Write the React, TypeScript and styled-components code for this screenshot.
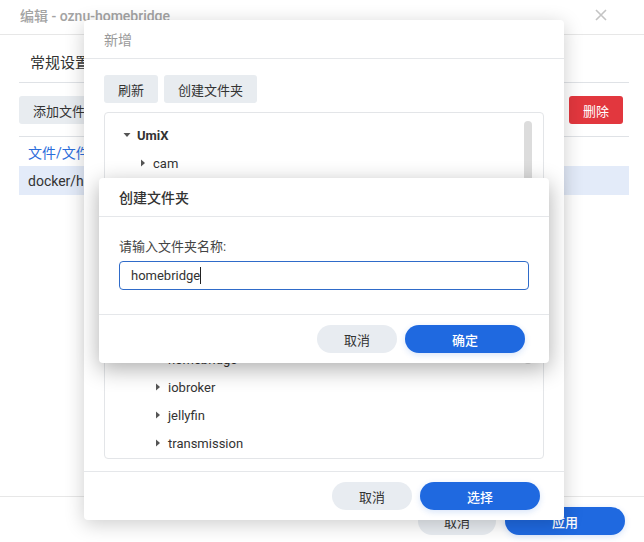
import React from "react";
import styled, { createGlobalStyle } from "styled-components";

const GlobalStyle = createGlobalStyle`
  html, body {
    margin: 0;
    padding: 0;
    background: #fff;
  }
  * {
    box-sizing: border-box;
  }
  body {
    font-family: Roboto, "Noto Sans CJK SC", sans-serif;
    color: #333;
  }
`;

type TreeNode = {
  name: string;
  level: number;
  open?: boolean;
  bold?: boolean;
};

// indent per tree level, px from the box edge
const indents = [18, 34, 49];

const nodes: TreeNode[] = [
  { name: "UmiX", level: 0, open: true, bold: true },
  { name: "cam", level: 1 },
  { name: "docker", level: 1, open: true },
  { name: "aria2", level: 2 },
  { name: "emby", level: 2 },
  { name: "freshrss", level: 2 },
  { name: "gitea", level: 2 },
  { name: "home-assistant", level: 2 },
  { name: "homebridge", level: 2 },
  { name: "iobroker", level: 2 },
  { name: "jellyfin", level: 2 },
  { name: "transmission", level: 2 },
];

function Caret({ open }: { open?: boolean }) {
  return (
    <CaretBox>
      <svg width="8" height="8" viewBox="0 0 8 8">
        {open ? (
          <path d="M0.5 2 L7.5 2 L4 6 Z" fill="#555" />
        ) : (
          <path d="M2 0.5 L6 4 L2 7.5 Z" fill="#555" />
        )}
      </svg>
    </CaretBox>
  );
}

export default function App() {
  return (
    <>
      <GlobalStyle />
      <Screen>
        <BgHeader>
          <BgTitle>编辑 - oznu-homebridge</BgTitle>
          <CloseIcon viewBox="0 0 12 12">
            <path d="M1 1 L11 11 M11 1 L1 11" stroke="#c4c4c4" strokeWidth="1.6" />
          </CloseIcon>
        </BgHeader>
        <BgBody>
          <Tabs>
            <Tab>常规设置</Tab>
          </Tabs>
          <BgToolbar>
            <Button>添加文件夹</Button>
            <Button $variant="danger">删除</Button>
          </BgToolbar>
          <TableHead>文件/文件夹</TableHead>
          <TableRow $selected>docker/homebridge</TableRow>
        </BgBody>
        <BgFooter>
          <PillButton $width={78}>取消</PillButton>
          <PillButton $primary $width={120}>应用</PillButton>
        </BgFooter>

        <Dialog $left={84} $top={20} $width={480}>
          <DialogHeader>
            <DialogTitle $muted>新增</DialogTitle>
          </DialogHeader>
          <PickerToolbar>
            <Button>刷新</Button>
            <Button>创建文件夹</Button>
          </PickerToolbar>
          <TreeBox>
            {nodes.map((n) => (
              <TreeRow key={n.name} $indent={indents[n.level]}>
                <Caret open={n.open} />
                <TreeLabel $bold={n.bold}>{n.name}</TreeLabel>
              </TreeRow>
            ))}
            <ScrollThumb />
          </TreeBox>
          <DialogFooter>
            <PillButton $width={80}>取消</PillButton>
            <PillButton $primary $width={120}>选择</PillButton>
          </DialogFooter>
        </Dialog>

        <Dialog $left={99} $top={178} $width={450} $strong>
          <DialogHeader>
            <DialogTitle>创建文件夹</DialogTitle>
          </DialogHeader>
          <FormBody>
            <FieldLabel>请输入文件夹名称:</FieldLabel>
            <NameInput>
              homebridge
              <Cursor />
            </NameInput>
          </FormBody>
          <DialogFooter>
            <PillButton $width={80}>取消</PillButton>
            <PillButton $primary $width={120}>确定</PillButton>
          </DialogFooter>
        </Dialog>
      </Screen>
    </>
  );
}

const Screen = styled.div`
  position: relative;
  width: 644px;
  height: 542px;
  overflow: hidden;
  display: flex;
  flex-direction: column;
  background: #fff;
`;

const BgHeader = styled.div`
  height: 35px;
  flex-shrink: 0;
  display: flex;
  align-items: center;
  justify-content: space-between;
  padding: 0 37px 4px 20px;
  border-bottom: 1px solid #e7e7e7;
`;

const BgTitle = styled.div`
  font-size: 14px;
  font-weight: 500;
  color: #a3a3a3;
`;

const CloseIcon = styled.svg`
  width: 12px;
  height: 12px;
`;

const BgBody = styled.div`
  flex: 1;
  padding: 0 15px 0 19px;
`;

const Tabs = styled.div`
  height: 48px;
  display: flex;
  align-items: center;
  padding: 6px 11px 0;
  border-bottom: 1px solid #dfe2e6;
`;

const Tab = styled.div`
  font-size: 15px;
  color: #333;
`;

const BgToolbar = styled.div`
  display: flex;
  justify-content: space-between;
  padding: 13px 6px 12px 0;
  border-bottom: 1px solid #dfe2e6;
`;

const Button = styled.button<{ $variant?: "danger" }>`
  height: 28px;
  padding: 0 14px;
  border: none;
  border-radius: 3px;
  font-family: inherit;
  font-size: 13px;
  background: ${(p) => (p.$variant === "danger" ? "#e2373e" : "#e8ecf0")};
  color: ${(p) => (p.$variant === "danger" ? "#fff" : "#333")};
`;

const TableHead = styled.div`
  height: 29px;
  display: flex;
  align-items: center;
  padding-left: 9px;
  font-size: 14px;
  color: #2b6ddb;
`;

const TableRow = styled.div<{ $selected?: boolean }>`
  height: 29px;
  display: flex;
  align-items: center;
  padding-left: 9px;
  font-size: 14px;
  color: #333;
  background: ${(p) => (p.$selected ? "#e3ebf9" : "transparent")};
`;

const BgFooter = styled.div`
  height: 46px;
  flex-shrink: 0;
  display: flex;
  justify-content: flex-end;
  align-items: flex-start;
  gap: 9px;
  padding: 10px 19px 0 0;
  border-top: 1px solid #e7e7e7;
`;

const PillButton = styled.button<{ $primary?: boolean; $width: number }>`
  width: ${(p) => p.$width}px;
  height: 28px;
  border: none;
  border-radius: 14px;
  font-family: inherit;
  font-size: 13px;
  font-weight: ${(p) => (p.$primary ? 500 : 400)};
  background: ${(p) => (p.$primary ? "#1f69e0" : "#e8ecf1")};
  color: ${(p) => (p.$primary ? "#fff" : "#333")};
  box-shadow: ${(p) => (p.$primary ? "0 2px 6px rgba(31,105,224,0.18)" : "none")};
`;

const Dialog = styled.div<{ $left: number; $top: number; $width: number; $strong?: boolean }>`
  position: absolute;
  left: ${(p) => p.$left}px;
  top: ${(p) => p.$top}px;
  width: ${(p) => p.$width}px;
  background: #fff;
  border-radius: 4px;
  box-shadow: ${(p) =>
    p.$strong
      ? "0 6px 22px rgba(0,0,0,0.32)"
      : "0 4px 20px rgba(0,0,0,0.2)"};
  display: flex;
  flex-direction: column;
`;

const DialogHeader = styled.div`
  height: 39px;
  display: flex;
  align-items: center;
  padding: 0 20px;
  border-bottom: 1px solid #e5e7ea;
`;

const DialogTitle = styled.div<{ $muted?: boolean }>`
  font-size: 14px;
  font-weight: ${(p) => (p.$muted ? 400 : 500)};
  color: ${(p) => (p.$muted ? "#9a9a9a" : "#333")};
`;

const PickerToolbar = styled.div`
  display: flex;
  gap: 6px;
  padding: 16px 20px 9px;
`;

const TreeBox = styled.div`
  position: relative;
  height: 347px;
  margin: 0 20px 12px;
  padding-top: 8px;
  border: 1px solid #e3e5e8;
  border-radius: 4px;
  overflow: hidden;
`;

const TreeRow = styled.div<{ $indent: number }>`
  height: 28px;
  display: flex;
  align-items: center;
  padding-left: ${(p) => p.$indent}px;
`;

const CaretBox = styled.span`
  width: 10px;
  display: flex;
  align-items: center;
  margin-right: 4px;
`;

const TreeLabel = styled.span<{ $bold?: boolean }>`
  font-size: 13px;
  font-weight: ${(p) => (p.$bold ? 700 : 400)};
  color: #333;
`;

const ScrollThumb = styled.div`
  position: absolute;
  top: 8px;
  right: 11px;
  width: 8px;
  height: 243px;
  border-radius: 4px;
  background: #dcdcdc;
`;

const DialogFooter = styled.div`
  display: flex;
  justify-content: flex-end;
  gap: 8px;
  padding: 10px 24px 10px 0;
  border-top: 1px solid #e5e7ea;
`;

const FormBody = styled.div`
  padding: 19px 20px 24px;
`;

const FieldLabel = styled.div`
  font-size: 13px;
  color: #444;
  margin-bottom: 6px;
`;

const NameInput = styled.div`
  height: 29px;
  display: flex;
  align-items: center;
  padding: 0 11px;
  border: 1px solid #2f6bc9;
  border-radius: 4px;
  font-size: 13px;
  color: #333;
`;

const Cursor = styled.span`
  display: inline-block;
  width: 1px;
  height: 17px;
  background: #222;
`;
